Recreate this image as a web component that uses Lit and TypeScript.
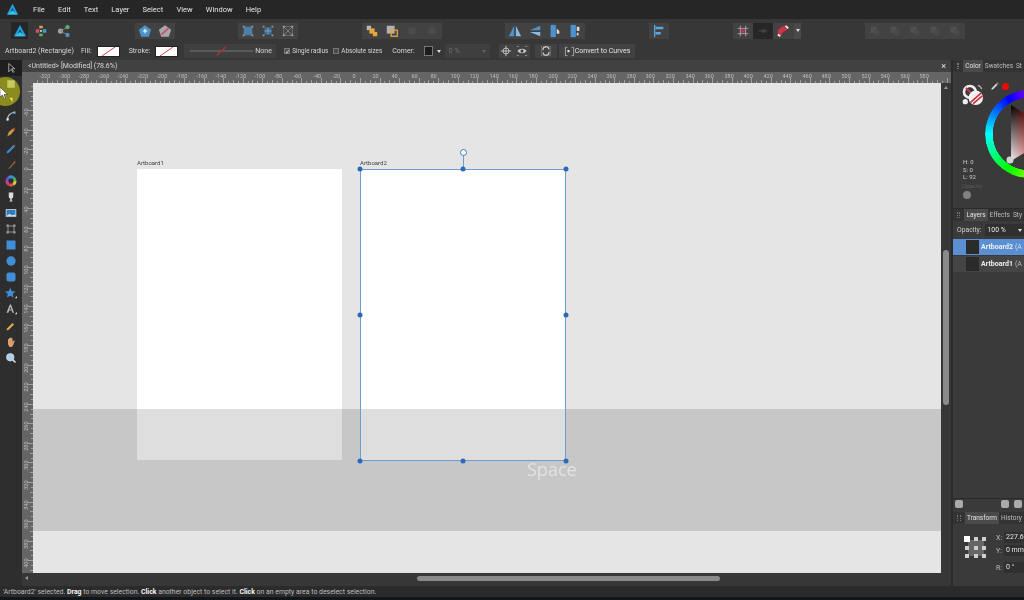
import { LitElement, html, css, svg } from 'lit'
import { customElement } from 'lit/decorators.js'

const MENU = ['File', 'Edit', 'Text', 'Layer', 'Select', 'View', 'Window', 'Help']
const SCALE = 0.978

const ic = (body: unknown, size = 14) =>
  html`<svg width=${size} height=${size} viewBox="0 0 16 16">${body}</svg>`

const logo = svg`<path d="M8 1 15 14H1Z" fill="#1f9fe0"/><path d="M8 6 11.500 13H4.500Z" fill="#0b3f66"/><path d="M2 14 8 9l6 5Z" fill="#35c4e8"/>`

// little colour wheel for the side toolbar, one arc per hue
const HUES = ['#e8c030', '#d8503a', '#d03a8a', '#6a50d0', '#3a90d8', '#40b070']
const wheelArcs = HUES.map((c, i) => {
  const a = (i * Math.PI) / 3
  const b = ((i + 1) * Math.PI) / 3
  const r = 5.5
  return svg`<path d="M${8 + r * Math.cos(a)} ${8 + r * Math.sin(a)}A${r} ${r} 0 0 1 ${8 + r * Math.cos(b)} ${8 + r * Math.sin(b)}" fill="none" stroke=${c} stroke-width="4"/>`
})

// top toolbar icon sets, one array per button group
const T_SHAPE = [
  svg`<path d="M8 1.500 15 6.500 12.300 14.500H3.700L1 6.500Z" fill="#4c93c9"/><path d="M8 5.500v5M5.500 8h5" stroke="#fff" stroke-width="1.300"/>`,
  svg`<path d="M8 1.500 15 6.500 12.300 14.500H3.700L1 6.500Z" fill="#a9a9ad"/><path d="M4 12 12 5" stroke="#c9555f" stroke-width="2"/>`,
]
const T_BOX = [
  svg`<rect x="3" y="3" width="10" height="10" fill="#4c7fa8"/><path d="M2 2h2v2H2zM12 2h2v2h-2zM2 12h2v2H2zM12 12h2v2h-2z" fill="#9a9a9a"/>`,
  svg`<rect x="4" y="4" width="8" height="8" fill="#3d6f96"/><path d="M8 4v8M4 8h8" stroke="#7fa8c8"/><path d="M2 2h2v2H2zM12 2h2v2h-2zM2 12h2v2H2zM12 12h2v2h-2z" fill="#9a9a9a"/>`,
  svg`<rect x="3" y="3" width="10" height="10" fill="none" stroke="#777"/><path d="M3 3l10 10M13 3 3 13" stroke="#8a8a8a"/><path d="M2 2h2v2H2zM12 2h2v2h-2zM2 12h2v2H2zM12 12h2v2h-2z" fill="#a0a0a0"/>`,
]
const T_ORDER = [
  svg`<rect x="2" y="2" width="5" height="5" fill="#b9b9b9"/><rect x="5" y="5" width="6" height="6" fill="#e0a93a"/><rect x="9" y="9" width="5" height="5" fill="#e0a93a"/>`,
  svg`<rect x="2" y="2" width="9" height="9" fill="#b0b0b0"/><rect x="7" y="7" width="7" height="7" fill="none" stroke="#e0a93a" stroke-width="1.500"/>`,
  svg`<rect x="4" y="4" width="8" height="8" fill="#4b4b4b"/>`,
  svg`<rect x="4" y="4" width="8" height="8" fill="#4b4b4b"/>`,
]
const T_FLIP = [
  svg`<path d="M7 2v12H1Z" fill="#4b93d0"/><path d="M9 2v12h6Z" fill="#8fb9dc"/>`,
  svg`<path d="M14 2v5L2 7Z" fill="#4b93d0"/><path d="M14 14V9L2 9Z" fill="#8fb9dc"/>`,
  svg`<path d="M3 1h6v14H3Z" fill="#4b93d0"/><path d="M10 5l3 3v3h-3Z" fill="#d8d8d8"/>`,
  svg`<path d="M3 1h6v14H3Z" fill="#4b93d0"/><path d="M10 3h3v5h-3zM10 10h2v3h-2z" fill="#d8d8d8"/>`,
]
const T_ALIGN = [svg`<path d="M3 1v14" stroke="#5aa5dc" stroke-width="1.500"/><path d="M4 3h9v3H4zM4 9h6v3H4z" fill="#5aa5dc"/>`]
const T_BOOL = [0, 1, 2, 3, 4].map(
  () => svg`<rect x="3" y="3" width="7" height="7" fill="#505050"/><rect x="7" y="7" width="6" height="6" fill="#4a4a4a"/>`,
)

const SIDE = [
  svg`<path d="M5 2v11l3-3 3 4 1-1-3-4h4Z" fill="none" stroke="#c9c9c9"/>`,
  svg`<rect x="3" y="3" width="10" height="10" fill="#c8c860"/>`,
  svg`<path d="M6 5h4v6Z" fill="#e8e860"/>`,
  svg`<path d="M3 14C3 7 6 4 13 3" fill="none" stroke="#c9c9c9" stroke-width="1.400"/><rect x="2" y="11" width="3" height="3" fill="#e8e8e8"/><rect x="11" y="2" width="3" height="3" fill="#7fb0d8"/>`,
  svg`<path d="M3 14 5 8l6-5 2 2-5 6Z" fill="#d09a3c"/><path d="M10 4l2-2 2 2-2 2Z" fill="#b5473a"/>`,
  svg`<path d="M2 14l1-3 8-8 2 2-8 8Z" fill="#3f8fd0"/><path d="M11 3l1-1 2 2-1 1Z" fill="#c05050"/>`,
  svg`<path d="M2 14c2 0 3-1 4-3l7-8 1 1-7 8c-1 1-3 2-5 2Z" fill="#a76a34"/><path d="M11 5l2-2 1 1-2 2Z" fill="#c05050"/>`,
  wheelArcs,
  svg`<path d="M5 2h6v5c0 2-1 3-2 3v3h1v1H6v-1h1v-3C6 10 5 9 5 7Z" fill="#dcdcdc"/>`,
  svg`<rect x="1" y="3" width="14" height="10" fill="#dfe8f0"/><rect x="2" y="4" width="12" height="8" fill="#2f7fc0"/><path d="M2 12l4-3 3 2 5-1v2Z" fill="#cfe0ee"/>`,
  svg`<rect x="4" y="4" width="8" height="8" fill="none" stroke="#9a9a9a" stroke-width="1.200"/><path d="M2 2h3v3H2zM11 2h3v3h-3zM2 11h3v3H2zM11 11h3v3h-3z" fill="#9a9a9a"/>`,
  svg`<rect x="2" y="2" width="12" height="12" fill="#3f8fd8"/>`,
  svg`<circle cx="8" cy="8" r="6.200" fill="#3f8fd8"/>`,
  svg`<rect x="2" y="2" width="12" height="12" rx="3" fill="#3f8fd8"/>`,
  svg`<path d="M7 1l2 4.500 5 .5-3.700 3.300L11.500 14 7 11.500 2.500 14l1.200-4.700L0 6l5-.5Z" fill="#3f8fd8"/><path d="M13 15l3-3v3Z" fill="#ddd"/>`,
  svg`<path d="M2 13 6.500 2h1.500L12 13h-2l-1-3H5.500l-1 3ZM6 8.500h2.500L7.200 5Z" fill="#b9b9b9"/><path d="M13 15l3-3v3Z" fill="#ddd"/>`,
  svg`<path d="M2 14l1-3 7-7 2 2-7 7Z" fill="#e0b050"/><path d="M10 3l2-1 2 2-1 2Z" fill="#333"/>`,
  svg`<path d="M4 8V4h1.500v3V2.500H7V7V2h1.500v5V3H10v5l1.500-2H13l-2 6-2 2.500H6L4 11Z" fill="#d8a070"/>`,
  svg`<circle cx="7" cy="7" r="5" fill="#a8d0f0" stroke="#ddd"/><path d="M10.500 10.500 14 14" stroke="#ddd" stroke-width="2"/>`,
]

@customElement('ruler-strip')
class RulerStrip extends LitElement {
  static properties = { vertical: { type: Boolean } }
  vertical = false

  static styles = css`
    :host { display: block; background: #656565; overflow: hidden; }
    svg { display: block; }
    text { font: 5.500px Roboto, sans-serif; fill: #bdbdbd; }
    line { stroke: #a0a0a0; stroke-width: 1; }
  `

  render() {
    const ticks = []
    const origin = this.vertical ? 86 : 327
    const [from, to] = this.vertical ? [-85, 415] : [-335, 600]
    for (let u = from; u <= to; u += 5) {
      const p = Math.round(origin + u * SCALE) + 0.5
      const major = u % 20 === 0
      const len = major ? 5 : u % 10 === 0 ? 3 : 2
      if (this.vertical) {
        ticks.push(svg`<line x1=${11 - len} y1=${p} x2="11" y2=${p}></line>`)
        if (major && u >= -60 && u <= 400) {
          ticks.push(svg`<text transform="translate(6 ${p - 2}) rotate(-90)" text-anchor="end">${u}</text>`)
        }
      } else {
        ticks.push(svg`<line x1=${p} y1=${11 - len} x2=${p} y2="11"></line>`)
        if (major && u >= -320 && u <= 580) ticks.push(svg`<text x=${p - 8} y="6">${u}</text>`)
      }
    }
    const w = this.vertical ? 11 : 919
    const h = this.vertical ? 490 : 11
    return html`<svg width=${w} height=${h}>${ticks}</svg>`
  }
}

@customElement('color-wheel')
class ColorWheel extends LitElement {
  static styles = css`
    :host { display: block; position: relative; width: 88px; height: 88px; flex: none; }
    .ring {
      position: absolute; inset: 0; border-radius: 50%;
      background: conic-gradient(from 90deg, #f00, #ff0, #0f0, #0ff, #00f, #f0f, #f00);
      -webkit-mask: radial-gradient(circle, transparent 36px, #000 36.500px);
      mask: radial-gradient(circle, transparent 36px, #000 36.500px);
    }
    svg { position: absolute; inset: 0; }
  `
  render() {
    return html`<div class="ring"></div>
      <svg width="88" height="88">
        <defs>
          <linearGradient id="v" x1="0" y1="0" x2="0" y2="1"><stop offset="0" stop-color="#000"/><stop offset="1" stop-color="#eee"/></linearGradient>
          <linearGradient id="h" x1="0" y1="0" x2="1" y2="0"><stop offset="0" stop-color="#e00" stop-opacity="0"/><stop offset="1" stop-color="#e00"/></linearGradient>
        </defs>
        <path d="M26 15V71L70 44Z" fill="url(#v)"/>
        <path d="M26 15V71L70 44Z" fill="url(#h)"/>
        <circle cx="25" cy="70" r="3.500" fill="#d2d2d2"/>
      </svg>`
  }
}

@customElement('app-root')
export class AppRoot extends LitElement {
  static styles = css`
    :host {
      display: block; width: 1024px; height: 600px; overflow: hidden;
      background: #373737; color: #d6d6d6;
      font-family: Roboto, 'Liberation Sans', sans-serif;
    }
    svg { display: block; }
    .app { height: 600px; display: flex; flex-direction: column; filter: blur(0.5px); }

    .menu { height: 19px; flex: none; background: #262626; display: flex; align-items: center; padding-left: 6px; font-size: 7.500px; }
    .menu .brand { width: 27px; }
    .menu nav { display: flex; gap: 13.200px; color: #e2e2e2; }

    .tools { height: 23px; flex: none; display: flex; align-items: center; padding-left: 11px; }
    .grp { height: 16px; display: flex; align-items: center; background: #424242; }
    .btn { width: 20px; height: 16px; display: flex; align-items: center; justify-content: center; }
    .btn.on { background: #262626; }
    .personas { width: 124px; display: flex; align-items: center; }
    .personas .on { height: 17px; width: 17px; }
    .personas .btn { margin-right: 3px; }
    .g3 { margin-left: 63px; }
    .g4 { margin-left: 64px; }
    .g5 { margin-left: 63px; }
    .g6 { margin-left: 64px; }
    .g7 { margin-left: 64px; }
    .g8 { margin-left: 64px; }
    .caret { width: 0; height: 0; border: 2.500px solid transparent; border-top: 3px solid #ddd; border-bottom: 0; }
    .drop { width: 7px; height: 16px; display: flex; align-items: center; justify-content: center; background: #4a4a4a; margin-left: 1px; }

    .context { height: 18px; flex: none; display: flex; align-items: center; padding-left: 5px; font-size: 7px; color: #d8d8d8; white-space: nowrap; }
    .swatch { width: 23px; height: 11px; background: #fff; border: 1px solid #222; box-sizing: border-box; margin-left: 5px; }
    .swatch svg { width: 21px; height: 9px; }
    .lbl-sel { width: 76px; }
    .lbl-stroke { margin-left: 9px; }
    .line { margin-left: 6px; width: 92px; height: 14px; background: #3f3f3f; display: flex; align-items: center; padding-left: 6px; box-sizing: border-box; }
    .line svg { margin-right: 2px; }
    .check { width: 6px; height: 6px; background: #555; border: 1px solid #777; margin-right: 2px; box-sizing: border-box; font-size: 6px; line-height: 5px; color: #eee; }
    .c1 { margin-left: 8px; }
    .c2 { margin-left: 5px; background: #4a4a4a; }
    .tight { font-size: 6.300px; }
    .corner { margin-left: 10px; }
    .csw { width: 9px; height: 10px; margin-left: 9px; background: #1c1c1c; border: 1px solid #777; box-sizing: border-box; }
    .context .caret { margin-left: 4px; }
    .pct { margin-left: 4px; width: 45px; height: 14px; background: #3f3f3f; color: #6e6e6e; display: flex; align-items: center; justify-content: space-between; padding: 0 4px; box-sizing: border-box; }
    .pct .caret { border-top-color: #666; }
    .cg { height: 14px; background: #424242; display: flex; align-items: center; justify-content: center; }
    .cg1 { margin-left: 9px; width: 31px; gap: 4px; }
    .cg2 { margin-left: 5px; width: 22px; }
    .cg3 { margin-left: 2px; width: 76px; padding-left: 5px; box-sizing: border-box; justify-content: flex-start; color: #e4e4e4; }

    .main { flex: 1; display: flex; min-height: 0; }

    .side { width: 22px; flex: none; position: relative; background: #2e2e2e; }
    .glow { position: absolute; left: -9.500px; top: 16.500px; width: 29px; height: 29px; border-radius: 50%; background: #8c8c1e; }
    .cursor { position: absolute; left: 0; top: 27px; }
    .side .tool { position: relative; height: 16.100px; display: flex; align-items: center; justify-content: center; }
    .side .tool:nth-child(2) { background: #1f1f1f; }

    .doc { width: 929px; flex: none; display: flex; flex-direction: column; min-width: 0; }
    .tabrow { height: 12px; flex: none; background: #414141; display: flex; align-items: center; justify-content: space-between; padding: 0 5px 0 6px; font-size: 7px; color: #d8d8d8; }
    .tabrow b { font-weight: 400; font-size: 9px; color: #e4e4e4; }
    .topruler { height: 11px; flex: none; padding-left: 11px; background: #656565; }
    .mid { flex: 1; display: flex; min-height: 0; }
    ruler-strip[vertical] { width: 11px; flex: none; }

    .canvas { flex: 1; position: relative; background: #e5e5e5; overflow: hidden; color: #333; }
    .board { position: absolute; top: 86px; width: 205px; height: 291px; background: #fff; }
    .b1 { left: 104px; }
    .b2 { left: 327px; }
    .name { position: absolute; top: 76px; font-size: 6px; color: #444; }
    .n1 { left: 104px; }
    .n2 { left: 327px; }
    .band { position: absolute; left: 0; right: 0; top: 326px; height: 122px; background: rgba(0, 0, 0, 0.13); }
    .sel { position: absolute; left: 327px; top: 86px; width: 206px; height: 292px; box-shadow: inset 0 0 0 1px #6f9dd0; }
    .h { position: absolute; width: 5px; height: 5px; border-radius: 50%; background: #2a6ab8; transform: translate(-50%, -50%); }
    .stem { position: absolute; left: 103px; top: -14px; width: 1px; height: 14px; background: #6f9dd0; }
    .rot { position: absolute; left: 99.500px; top: -20.500px; width: 5px; height: 5px; border-radius: 50%; background: #fff; border: 1px solid #3b7cc4; }
    .space { position: absolute; left: 494px; top: 374px; font-size: 18px; color: #e2e2e2; font-family: 'Open Sans', sans-serif; }

    .vscroll { width: 10px; flex: none; background: #373737; position: relative; }
    .vscroll .up { position: absolute; left: 3px; top: 3px; width: 0; height: 0; border: 2.500px solid transparent; border-bottom: 3.500px solid #999; border-top: 0; }
    .vscroll .thumb { position: absolute; left: 2px; top: 167px; width: 6px; height: 155px; border-radius: 3px; background: #8a8a8a; }
    .hscroll { height: 13px; flex: none; position: relative; }
    .hscroll .thumb { position: absolute; left: 395px; top: 3px; width: 303px; height: 5px; border-radius: 3px; background: #8a8a8a; }
    .hscroll .left { position: absolute; left: 3px; top: 3px; width: 0; height: 0; border: 2.500px solid transparent; border-right: 3.500px solid #999; border-left: 0; }

    .panels { flex: 1; min-width: 0; display: flex; flex-direction: column; background: #2b2b2b; overflow: hidden; white-space: nowrap; }
    .ptabs { height: 12px; flex: none; display: flex; align-items: stretch; padding-left: 4px; background: #333; font-size: 6.500px; color: #bdbdbd; margin-left: 2px; }
    .ptabs .grip { width: 4px; border-left: 1px dotted #777; border-right: 1px dotted #777; margin: 3px 4px 3px 0; box-sizing: border-box; }
    .ptabs span { padding: 0 1px; display: flex; align-items: center; margin-right: 1px; }
    .ptabs .on { background: #4a4a4a; color: #e4e4e4; padding: 0 2px; }
    .pbody { background: #3a3a3a; margin-left: 2px; }

    .color { height: 136px; flex: none; display: flex; position: relative; box-sizing: border-box; padding-top: 18px; }
    .color .left { width: 32px; flex: none; padding-left: 9px; margin-top: -6px; box-sizing: border-box; font-size: 6px; color: #cfcfcf; }
    .color .fillrow { height: 22px; }
    .color .hsl { margin-top: 52px; line-height: 7.500px; padding-left: 1px; }
    .opacity { margin-top: 1px; color: #585858; font-size: 6px; }
    .knob { margin-top: 2px; margin-left: 1px; width: 8px; height: 8px; border-radius: 50%; background: #808080; }
    .color .tools2 { position: absolute; left: 37px; top: 9px; display: flex; align-items: center; gap: 2px; }
    .dot { width: 7px; height: 7px; border-radius: 50%; background: #f00808; }

    .gap1 { height: 1px; flex: none; }
    .layers { flex: 1; min-height: 0; }
    .opac { height: 18px; display: flex; align-items: center; font-size: 6.800px; padding-left: 4px; color: #cfcfcf; }
    .opac .field { margin-left: 3px; flex: 1; height: 12px; background: #303030; display: flex; align-items: center; justify-content: space-between; padding: 0 2px 0 3px; color: #e8e8e8; }
    .layer { height: 16px; display: flex; align-items: center; padding-left: 13px; font-size: 7px; font-weight: 700; color: #eee; background: #454545; margin-bottom: 1px; }
    .layer.on { background: #5a8fd3; }
    .thumb2 { width: 13px; height: 14px; background: #2a2a2a; margin-right: 2px; flex: none; }
    .layer i { font-style: normal; font-weight: 400; color: #bbb; margin-left: 2px; }
    .layer.on i { color: #d0dcec; }

    .pfoot { height: 13px; flex: none; display: flex; align-items: center; box-sizing: border-box; padding: 0 2px 4px; background: #3a3a3a; margin-left: 2px; margin-top: 1px; gap: 5px; }
    .pfoot .sp { flex: 1; }
    .mini { width: 8px; height: 8px; background: #aaa; border-radius: 2px; }

    .xform { height: 62px; flex: none; display: flex; padding: 13px 0 0 12px; box-sizing: border-box; gap: 10px; font-size: 7px; }
    .nine { width: 21px; height: 21px; flex: none; display: grid; grid-template-columns: repeat(3, 4px); grid-template-rows: repeat(3, 4px); justify-content: space-between; align-content: space-between; background: linear-gradient(#666, #666) center / 16px 16px no-repeat; }
    .nine span { background: #cfcfcf; }
    .nine span:first-child { background: #fff; box-shadow: 0 0 0 1px #fff; }
    .fields { display: flex; flex-direction: column; gap: 2px; margin-top: -5px; }
    .f { display: flex; align-items: center; height: 11px; gap: 2px; color: #bbb; }
    .f:last-child { margin-top: 4px; }
    .f b { font-weight: 400; background: #303030; width: 24px; height: 11px; line-height: 11px; padding-left: 2px; color: #e4e4e4; }

    .status { height: 11px; flex: none; background: #2b2b2b; padding-left: 3px; display: flex; align-items: center; font-size: 6.900px; color: #bdbdbd; white-space: pre; }
    .status b { color: #f4f4f4; }
    .foot { height: 3px; flex: none; background: #10161a; }
  `

  private group(cls: string, icons: unknown[]) {
    return html`<div class="grp ${cls}">${icons.map((i) => html`<div class="btn">${ic(i)}</div>`)}</div>`
  }

  render() {
    return html`
      <div class="app">
        <div class="menu">
          <div class="brand">${ic(logo, 13)}</div>
          <nav>${MENU.map((m) => html`<span>${m}</span>`)}</nav>
        </div>

        <div class="tools">
          <div class="personas">
            <div class="btn on">${ic(logo)}</div>
            <div class="btn">${ic(svg`<rect x="6" y="2" width="4" height="3" fill="#e0a040"/><rect x="2" y="6" width="4" height="4" fill="#d04f70"/><rect x="10" y="6" width="4" height="4" fill="#40a0d0"/><rect x="6" y="11" width="4" height="3" fill="#60b060"/><rect x="7" y="7" width="2" height="2" fill="#ddd"/>`)}</div>
            <div class="btn">${ic(svg`<circle cx="4" cy="8" r="3" fill="#9aa5ad"/><circle cx="12" cy="3.500" r="2.500" fill="#5fae6e"/><circle cx="12" cy="12.500" r="2.500" fill="#4a90c0"/><path d="M4 8 12 3.500M4 8l8 4.500" stroke="#888"/>`)}</div>
          </div>
          ${this.group('', T_SHAPE)}
          ${this.group('g3', T_BOX)}
          ${this.group('g4', T_ORDER)}
          ${this.group('g5', T_FLIP)}
          ${this.group('g6', T_ALIGN)}
          <div class="grp g7">
            <div class="btn">${ic(svg`<path d="M5 2v12M11 2v12M2 5h12M2 11h12" stroke="#aaa"/><rect x="6" y="6" width="4" height="4" fill="#c8324a"/>`)}</div>
            <div class="btn on">${ic(svg`<path d="M3 8h10" stroke="#555"/><rect x="7" y="6" width="3" height="4" fill="#444"/>`)}</div>
            <div class="btn">${ic(svg`<path d="M3 13 2 9c0-4 6-7 9-7l3 3-3 3c-2 0-4 2-4 4Z" fill="#c8324a"/><path d="M2 12l3 2M11 2l3 3" stroke="#eee" stroke-width="2"/>`)}</div>
            <div class="drop"><div class="caret"></div></div>
          </div>
          ${this.group('g8', T_BOOL)}
        </div>

        <div class="context">
          <span class="lbl-sel">Artboard2 (Rectangle)</span>
          <span>Fill:</span>
          <div class="swatch"><svg viewBox="0 0 21 9" preserveAspectRatio="none"><line x1="4" y1="9" x2="17" y2="0" stroke="#d04048"/></svg></div>
          <span class="lbl-stroke">Stroke:</span>
          <div class="swatch"><svg viewBox="0 0 21 9" preserveAspectRatio="none"><line x1="4" y1="9" x2="17" y2="0" stroke="#d04048"/></svg></div>
          <div class="line">
            <svg width="63" height="10"><line x1="0" y1="5" x2="63" y2="5" stroke="#777"/><line x1="27" y1="9" x2="36" y2="1" stroke="#b03038" stroke-width="1.300"/></svg>
            <span>None</span>
          </div>
          <div class="check c1">✓</div><span class="tight">Single radius</span>
          <div class="check c2"></div><span class="tight">Absolute sizes</span>
          <span class="corner">Corner:</span>
          <div class="csw"></div><div class="caret"></div>
          <div class="pct"><span>0 %</span><div class="caret"></div></div>
          <div class="cg cg1">
            ${ic(svg`<circle cx="8" cy="8" r="4" fill="none" stroke="#ddd"/><path d="M8 1v14M1 8h14" stroke="#ddd"/>`, 12)}
            ${ic(svg`<path d="M2 8c3-4 9-4 12 0-3 4-9 4-12 0Z" fill="#ccc"/><circle cx="8" cy="8" r="2" fill="#333"/><path d="M1 2h3M12 2h3M1 14h3M12 14h3" stroke="#999"/>`, 12)}
          </div>
          <div class="cg cg2">${ic(svg`<rect x="2" y="2" width="12" height="12" fill="none" stroke="#777"/><path d="M4 7a4 4 0 0 1 8-1M12 9a4 4 0 0 1-8 1" fill="none" stroke="#ddd" stroke-width="1.400"/>`, 12)}</div>
          <div class="cg cg3">
            ${ic(svg`<path d="M5 2H2v12h3M11 2h3v12h-3" fill="none" stroke="#ccc"/><rect x="5" y="6" width="3" height="3" fill="#eee"/>`, 11)}
            <span>Convert to Curves</span>
          </div>
        </div>

        <div class="main">
          <div class="side">
            <div class="glow"></div>
            ${SIDE.map((s) => html`<div class="tool">${ic(s, 12)}</div>`)}
            <svg class="cursor" width="8" height="13" viewBox="0 0 8 13"><path d="M0 0v10l2.500-2 1.500 4 1.500-.5L4 7.500h3.500Z" fill="#fff" stroke="#222" stroke-width=".5"/></svg>
          </div>

          <div class="doc">
            <div class="tabrow"><span>&lt;Untitled&gt; [Modified] (78.6%)</span><b>×</b></div>
            <div class="topruler"><ruler-strip></ruler-strip></div>
            <div class="mid">
              <ruler-strip vertical></ruler-strip>
              <div class="canvas">
                <span class="name n1">Artboard1</span>
                <span class="name n2">Artboard2</span>
                <div class="board b1"></div>
                <div class="board b2"></div>
                <div class="band"></div>
                <div class="sel">
                  <div class="stem"></div><div class="rot"></div>
                  ${[[0, 0], [50, 0], [100, 0], [0, 50], [100, 50], [0, 100], [50, 100], [100, 100]].map(
                    ([x, y]) => html`<div class="h" style="left:${x}%;top:${y}%"></div>`,
                  )}
                </div>
                <div class="space">Space</div>
              </div>
              <div class="vscroll"><div class="up"></div><div class="thumb"></div></div>
            </div>
            <div class="hscroll"><div class="left"></div><div class="thumb"></div></div>
          </div>

          <div class="panels">
            <div class="ptabs"><div class="grip"></div><span class="on">Color</span><span>Swatches</span><span>St</span></div>
            <div class="pbody color">
              <div class="left">
                <div class="fillrow">${ic(svg`<circle cx="6" cy="6" r="4.500" fill="none" stroke="#eee" stroke-width="2"/><path d="M3 3l6 6" stroke="#c8324a" stroke-width="1.500"/><circle cx="2.500" cy="13.500" r="2" fill="#eee"/><path d="M12 1a4 4 0 0 1 3 3" fill="none" stroke="#aaa"/><circle cx="10.500" cy="10.500" r="5.500" fill="#f4f4f4"/><path d="M6.500 14 14.500 7M8.500 15l7-6" stroke="#d03040" stroke-width="1.300"/>`, 21)}</div>
                <div class="hsl">H: 0<br />S: 0<br />L: 92</div>
                <div class="opacity">Opacity</div>
                <div class="knob"></div>
              </div>
              <div class="tools2">
                ${ic(svg`<path d="M2 14l1-3 7-7 2 2-7 7Z" fill="#d8d8d8"/><path d="M10 3l2-1 2 2-1 2Z" fill="#b07a30"/>`, 10)}
                <div class="dot"></div>
              </div>
              <color-wheel></color-wheel>
            </div>
            <div class="gap1"></div>
            <div class="ptabs"><div class="grip"></div><span class="on">Layers</span><span>Effects</span><span>Sty</span></div>
            <div class="pbody layers">
              <div class="opac"><span>Opacity:</span><div class="field"><span>100 %</span><div class="caret"></div></div></div>
              <div class="layer on"><div class="thumb2"></div>Artboard2<i>(A</i></div>
              <div class="layer"><div class="thumb2"></div>Artboard1<i>(A</i></div>
            </div>
            <div class="pfoot"><div class="mini"></div><div class="sp"></div><div class="mini"></div><div class="mini"></div></div>
            <div class="ptabs"><div class="grip"></div><span class="on">Transform</span><span>History</span></div>
            <div class="pbody xform">
              <div class="nine">${[0, 1, 2, 3, 4, 5, 6, 7, 8].map(() => html`<span></span>`)}</div>
              <div class="fields">
                <div class="f">X:<b>227.6</b></div>
                <div class="f">Y:<b>0 mm</b></div>
                <div class="f">R:<b>0 °</b></div>
              </div>
            </div>
          </div>
        </div>

        <div class="status"><span>'Artboard2' selected. <b>Drag</b> to move selection. <b>Click</b> another object to select it. <b>Click</b> on an empty area to deselect selection.</span></div>
        <div class="foot"></div>
      </div>
    `
  }
}
